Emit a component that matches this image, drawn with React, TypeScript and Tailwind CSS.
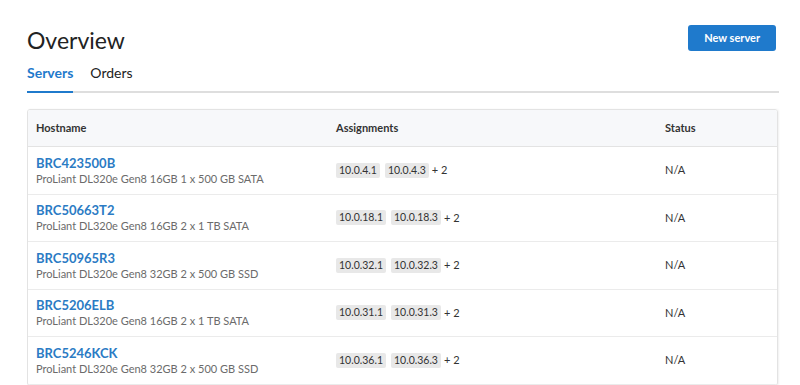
const servers = [
  { host: "BRC423500B", spec: "ProLiant DL320e Gen8 16GB 1 x 500 GB SATA", ips: ["10.0.4.1", "10.0.4.3"] },
  { host: "BRC50663T2", spec: "ProLiant DL320e Gen8 16GB 2 x 1 TB SATA", ips: ["10.0.18.1", "10.0.18.3"] },
  { host: "BRC50965R3", spec: "ProLiant DL320e Gen8 32GB 2 x 500 GB SSD", ips: ["10.0.32.1", "10.0.32.3"] },
  { host: "BRC5206ELB", spec: "ProLiant DL320e Gen8 16GB 2 x 1 TB SATA", ips: ["10.0.31.1", "10.0.31.3"] },
  { host: "BRC5246KCK", spec: "ProLiant DL320e Gen8 32GB 2 x 500 GB SSD", ips: ["10.0.36.1", "10.0.36.3"] },
]

const App = () => {
  return (
    <div className="min-h-screen bg-white pl-[27px] pr-[21px] text-[#222] font-['Lato',sans-serif]">
      {/* Header */}
      <div className="flex items-start justify-between pt-[25px]">
        <h1 className="text-[23px] leading-[30px] font-normal text-[#222]">Overview</h1>
        <button className="h-[26px] px-[16px] mr-[3px] rounded-[3px] bg-[#1f7acc] text-white text-[11px] font-bold">
          New server
        </button>
      </div>

      {/* Tabs */}
      <div className="mt-[9px] flex gap-[17px] border-b-2 border-[#dedede]">
        <div className="-mb-[2px] border-b-2 border-[#1f7acc] pb-[9px] text-[14px] font-bold text-[#1f7acc] leading-[18px]">
          Servers
        </div>
        <div className="pb-[9px] text-[14px] text-[#222] leading-[18px]">Orders</div>
      </div>

      {/* Table */}
      <div className="mt-[16px] mr-[1px] rounded-[3px] border border-[#e3e3e3] shadow-[1px_0_2px_rgba(0,0,0,0.06)] overflow-hidden">
        <div className="grid grid-cols-[300px_329px_1fr] h-[37px] items-center bg-[#f7f8fa] border-b border-[#e3e3e3] px-[8px] text-[11px] font-bold text-[#333]">
          <div>Hostname</div>
          <div>Assignments</div>
          <div>Status</div>
        </div>
        {servers.map((s) => (
          <div
            key={s.host}
            className="grid grid-cols-[300px_329px_1fr] h-[47.5px] items-center border-b border-[#ebebeb] px-[8px]"
          >
            <div className="flex flex-col">
              <span className="text-[13px] font-bold text-[#2b7bc4] leading-[16px]">{s.host}</span>
              <span className="text-[11px] text-[#6b6b6b] leading-[14px] mt-[1px]">{s.spec}</span>
            </div>
            <div className="flex items-center gap-[5px] text-[10.5px] text-[#333]">
              {s.ips.map((ip) => (
                <span key={ip} className="bg-[#e8e8e8] rounded-[2px] px-[3px] leading-[15px]">
                  {ip}
                </span>
              ))}
              <span className="text-[11px] -ml-[2px]">+ 2</span>
            </div>
            <div className="text-[11px] text-[#333]">N/A</div>
          </div>
        ))}
      </div>
    </div>
  )
}

export default App
